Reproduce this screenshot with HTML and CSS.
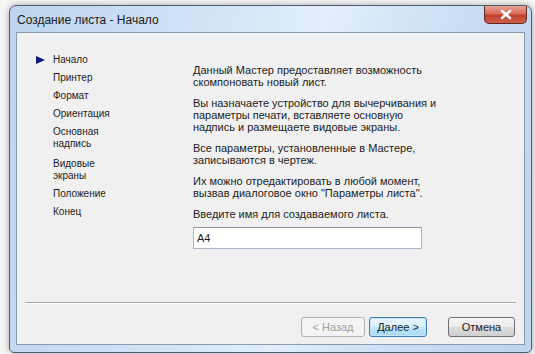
FILE: index.html
```html
<!DOCTYPE html>
<html lang="ru">
<head>
<meta charset="utf-8">
<title>Создание листа - Начало</title>
<link rel="stylesheet" href="styles.css">
</head>
<body>
<div class="window">
  <div class="titlebar">
    <div class="title">Создание листа - Начало</div>
    <div class="close">
      <svg width="14" height="11" viewBox="0 0 14 11"><path d="M3 2 L11 9 M11 2 L3 9" stroke="#fff" stroke-width="2.6" stroke-linecap="round"/></svg>
    </div>
  </div>
  <div class="client">
    <div class="main">
      <ul class="steps">
        <li class="step current"><span class="marker"></span><span>Начало</span></li>
        <li class="step"><span class="marker"></span><span>Принтер</span></li>
        <li class="step"><span class="marker"></span><span>Формат</span></li>
        <li class="step"><span class="marker"></span><span>Ориентация</span></li>
        <li class="step"><span class="marker"></span><span>Основная<br>надпись</span></li>
        <li class="step wide"><span class="marker"></span><span>Видовые<br>экраны</span></li>
        <li class="step"><span class="marker"></span><span>Положение</span></li>
        <li class="step"><span class="marker"></span><span>Конец</span></li>
      </ul>
      <div class="content">
        <p>Данный Мастер предоставляет возможность<br>скомпоновать новый лист.</p>
        <p>Вы назначаете устройство для вычерчивания и<br>параметры печати, вставляете основную<br>надпись и размещаете видовые экраны.</p>
        <p>Все параметры, установленные в Мастере,<br>записываются в чертеж.</p>
        <p>Их можно отредактировать в любой момент,<br>вызвав диалоговое окно "Параметры листа".</p>
        <p class="prompt">Введите имя для создаваемого листа.</p>
        <div class="field">А4</div>
      </div>
    </div>
    <div class="footer">
      <div class="sep"></div>
      <div class="buttons">
        <button class="btn disabled">&lt; Назад</button>
        <button class="btn default">Далее &gt;</button>
        <button class="btn cancel">Отмена</button>
      </div>
    </div>
  </div>
</div>
</body>
</html>
```

FILE: styles.css
```css
html, body {
  margin: 0;
  padding: 0;
}
body {
  width: 535px;
  height: 354px;
  overflow: hidden;
  background: #f6f6f6;
  font-family: "Liberation Sans", Arial, sans-serif;
  color: #1c1c1c;
}
.window {
  box-sizing: border-box;
  margin: 5px 0 0 9px;
  width: 523px;
  height: 348px;
  border: 1px solid #4f5d6c;
  border-radius: 7px 7px 5px 5px;
  background: linear-gradient(100deg, #bcd4ee 0%, #cfe1f4 30%, #e2eefa 55%, #c8dcf2 80%, #bed5ee 100%);
  box-shadow: 0 0 6px rgba(0,0,0,0.35);
  padding: 0 6px 7px 6px;
  display: flex;
  flex-direction: column;
}
.titlebar {
  height: 26px;
  display: flex;
  justify-content: space-between;
}
.title {
  align-self: center;
  padding-left: 1px;
  margin-top: 2px;
  font-size: 12px;
  color: #1a1a1a;
}
.close {
  align-self: flex-start;
  margin-right: -2px;
  width: 43px;
  height: 18px;
  box-sizing: border-box;
  border: 1px solid #5c2a26;
  border-top: none;
  border-radius: 0 0 5px 5px;
  background: linear-gradient(180deg, #e8a598 0%, #d66a58 45%, #c2402c 55%, #d06048 100%);
  display: flex;
  align-items: center;
  justify-content: center;
}
.client {
  flex: 1;
  border: 1px solid #8a9bb0;
  background: #f0f0f0;
  display: flex;
  flex-direction: column;
}
.main {
  flex: 1;
  display: flex;
  padding-top: 21px;
  font-size: 11px;
  line-height: 12px;
}
.steps {
  list-style: none;
  margin: 0 0 0 19px;
  padding: 0;
  width: 157px;
  display: flex;
  flex-direction: column;
  gap: 6px;
  font-size: 10px;
}
.step {
  display: flex;
}
.step.wide {
  margin-top: 2px;
}
.marker {
  width: 17px;
  flex: none;
  position: relative;
}
.current .marker::before {
  content: "";
  position: absolute;
  left: 0;
  top: 2px;
  border-left: 9px solid #0a1a7a;
  border-top: 4px solid transparent;
  border-bottom: 4px solid transparent;
}
.content {
  padding-top: 10px;
}
.content p {
  margin: 0 0 9px 0;
}
.content p.prompt {
  margin-bottom: 7px;
}
.field {
  width: 229px;
  height: 22px;
  box-sizing: border-box;
  border: 1px solid #abb7c6;
  border-top-color: #8d99a8;
  background: #fff;
  padding: 4px 3px;
  font-size: 11px;
  line-height: 12px;
}
.footer {
  display: flex;
  flex-direction: column;
}
.sep {
  margin: 0 8px;
  height: 1px;
  background: #a8a8a8;
  border-bottom: 1px solid #fff;
}
.buttons {
  display: flex;
  justify-content: flex-end;
  padding: 13px 9px 7px 0;
  gap: 4px;
}
.btn {
  height: 20px;
  box-sizing: border-box;
  font-family: "Liberation Sans", Arial, sans-serif;
  font-size: 11px;
  padding: 0;
  border: 1px solid #707070;
  border-radius: 3px;
  background: linear-gradient(180deg, #f4f4f4 0%, #ebebeb 48%, #dddddd 52%, #cfcfcf 100%);
  color: #1c1c1c;
}
.btn.disabled {
  width: 64px;
  border-color: #adb2b5;
  background: #f4f4f4;
  color: #a0a0a0;
}
.btn.default {
  width: 58px;
  border-color: #3c7fb1;
  background: linear-gradient(180deg, #e8f5fc 0%, #d9f0fc 48%, #bee6fd 52%, #a7d9f5 100%);
  box-shadow: inset 0 0 0 1px #c9e6f6;
}
.btn.cancel {
  width: 67px;
  margin-left: 17px;
}
```
